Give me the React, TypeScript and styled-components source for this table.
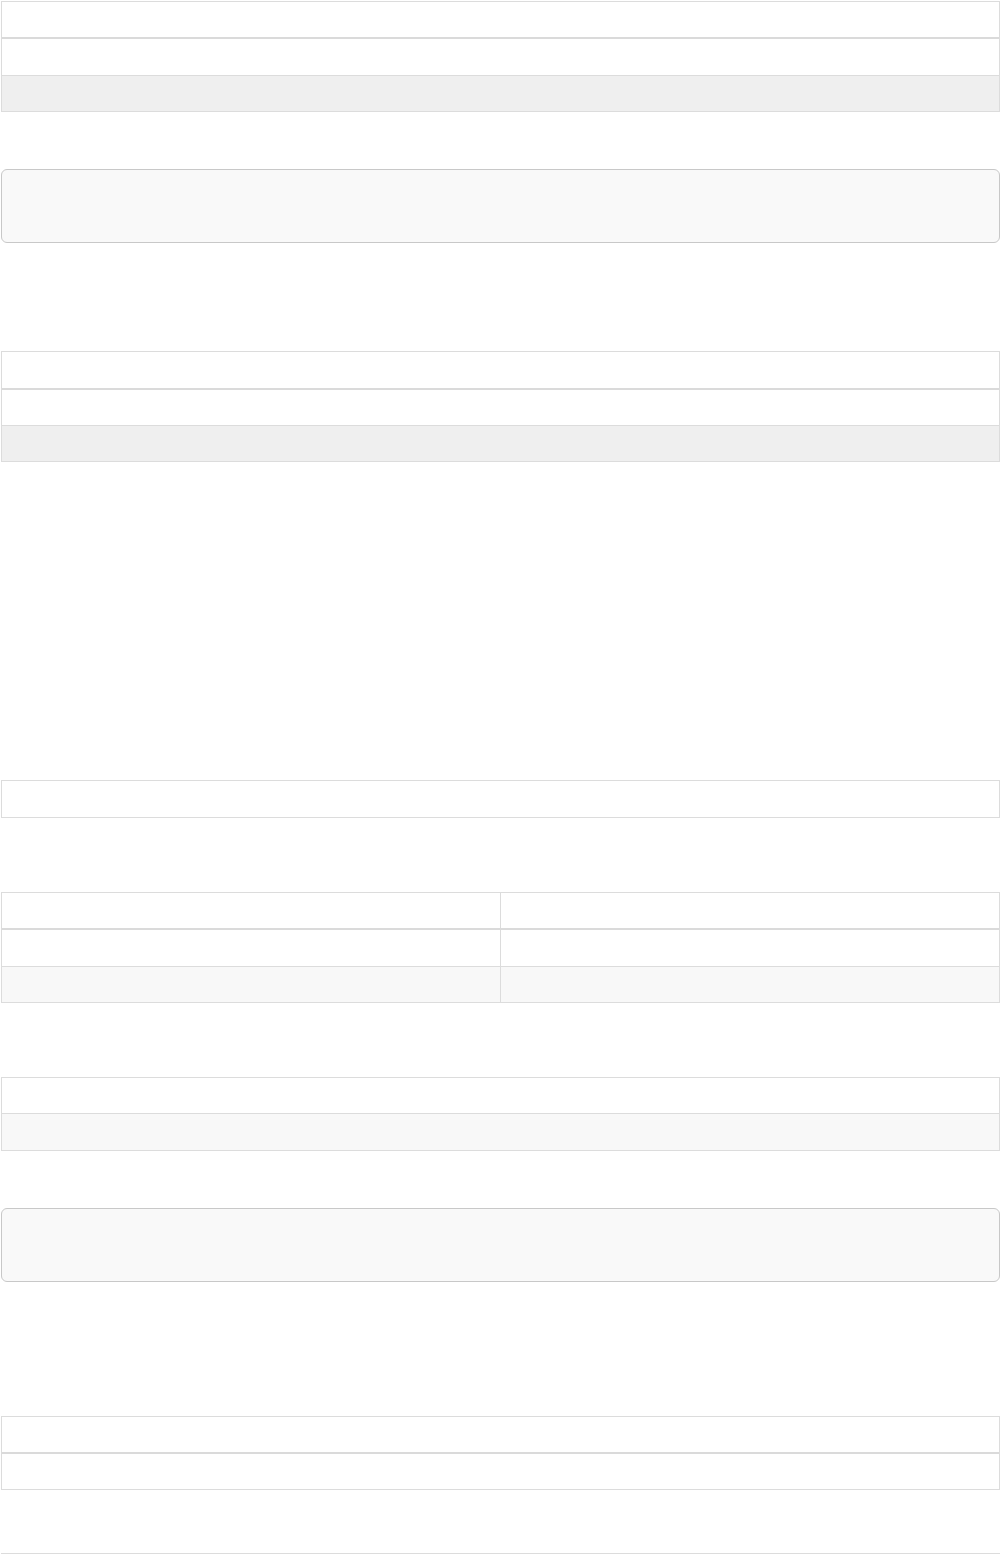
import React from "react"
import styled, { createGlobalStyle } from "styled-components"

const GlobalStyle = createGlobalStyle`
  html, body {
    margin: 0;
    padding: 0;
    background: #fff;
    font-family: "Liberation Sans", Arial, sans-serif;
  }
`

const ROW_HEIGHT = 35.4

const Page = styled.div`
  display: flex;
  flex-direction: column;
  padding: 1px 0 0 1px;
  width: 1000px;
  box-sizing: border-box;
`

const Table = styled.div<{ $gap?: number }>`
  display: flex;
  flex-direction: column;
  border: 1px solid #dcdcdc;
  margin-top: ${({ $gap }) => $gap ?? 0}px;
`

const Row = styled.div<{ $head?: boolean; $shade?: string; $last?: boolean }>`
  display: grid;
  grid-auto-flow: column;
  grid-auto-columns: 1fr;
  height: ${ROW_HEIGHT}px;
  flex-shrink: 0;
  background: ${({ $shade }) => $shade ?? "#fff"};
  border-bottom: ${({ $head, $last }) =>
    $last ? "none" : $head ? "2px solid #dadada" : "1px solid #dcdcdc"};
`

const Cell = styled.div`
  border-right: 1px solid #dcdcdc;
  &:last-child {
    border-right: none;
  }
`

const CodeBlock = styled.pre<{ $gap: number }>`
  margin: ${({ $gap }) => $gap}px 0 0 0;
  height: 72px;
  box-sizing: content-box;
  border: 1px solid #c8c8c8;
  border-radius: 6px;
  background: #f9f9f9;
  font-family: "Liberation Mono", monospace;
`

type Spec = { head?: boolean; shade?: string }

const DataTable = ({ gap, cols = 1, rows }: { gap?: number; cols?: number; rows: Spec[] }) => (
  <Table $gap={gap}>
    {rows.map((r, i) => (
      <Row key={i} $head={r.head} $shade={r.shade} $last={i === rows.length - 1}>
        {Array.from({ length: cols }).map((_, j) => (
          <Cell key={j} />
        ))}
      </Row>
    ))}
  </Table>
)

const App = () => (
  <>
    <GlobalStyle />
    <Page>
      <DataTable rows={[{ head: true }, {}, { shade: "#efefef" }]} />
      <CodeBlock $gap={57} />
      <DataTable gap={108} rows={[{ head: true }, {}, { shade: "#efefef" }]} />
      <DataTable gap={318} rows={[{}]} />
      <DataTable gap={74} cols={2} rows={[{ head: true }, {}, { shade: "#f8f8f8" }]} />
      <DataTable gap={74} rows={[{}, { shade: "#f8f8f8" }]} />
      <CodeBlock $gap={57} />
      <DataTable gap={134} rows={[{ head: true }, {}]} />
      <DataTable gap={63} rows={[{ head: true }, {}]} />
    </Page>
  </>
)

export default App
